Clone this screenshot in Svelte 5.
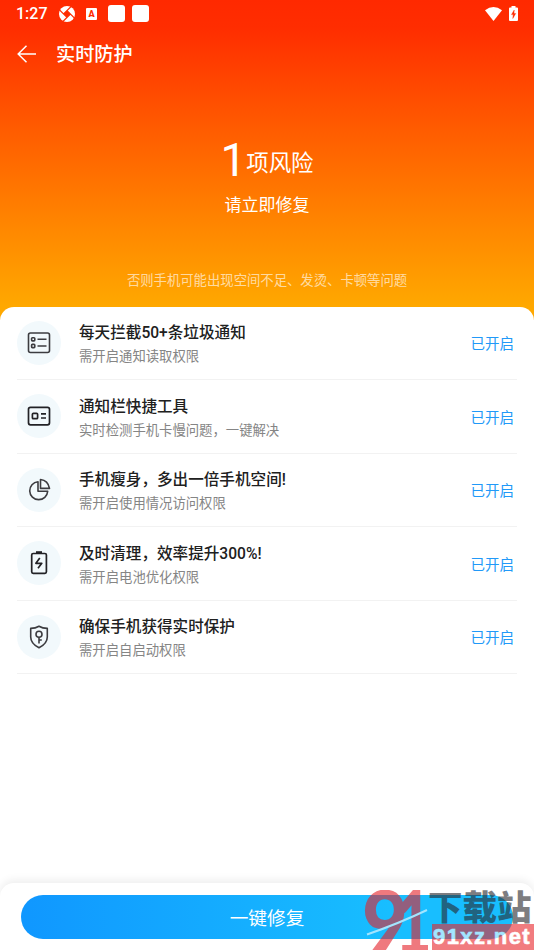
<script lang="ts">
  interface Item {
    icon: "list" | "tools" | "pie" | "battery" | "shield";
    title: string;
    desc: string;
  }

  const items: Item[] = [
    { icon: "list", title: "每天拦截50+条垃圾通知", desc: "需开启通知读取权限" },
    { icon: "tools", title: "通知栏快捷工具", desc: "实时检测手机卡慢问题，一键解决" },
    { icon: "pie", title: "手机瘦身，多出一倍手机空间!", desc: "需开启使用情况访问权限" },
    { icon: "battery", title: "及时清理，效率提升300%!", desc: "需开启电池优化权限" },
    { icon: "shield", title: "确保手机获得实时保护", desc: "需开启自启动权限" },
  ];
</script>

<div class="screen">
  <header class="hero">
    <div class="status-bar">
      <span class="time">1:27</span>
      <svg class="swirl" viewBox="0 0 16 16">
        <circle cx="8" cy="8" r="8" fill="#fff" />
        <path d="M8 4.600 11.400 8 8 11.400 4.600 8Z" fill="#ff2c00" />
        <path d="M4.600 8 12.300.3M8 4.600 15.700 12.300M11.400 8 3.700 15.700M8 11.400.3 3.700" stroke="#ff2c00" stroke-width="1.2" />
      </svg>
      <span class="badge-a">A</span>
      <i class="block"></i>
      <i class="block second"></i>
      <svg class="wifi" viewBox="0 0 17 14"><path d="M0 3.2Q8.5-3.2 17 3.2L8.5 14Z" fill="#fff" /></svg>
      <svg class="charge" viewBox="0 0 9 15">
        <path d="M2.5 0h4v1.5H8q1 0 1 1V14q0 1-1 1H1q-1 0-1-1V2.500q0-1 1-1h1.500Z" fill="#fff" />
        <path d="M5.200 4 2.500 8.600h1.700L3.800 12.500 6.700 7.500H5Z" fill="#ff2c00" stroke="#ff2c00" stroke-width=".4" />
      </svg>
    </div>

    <nav>
      <svg class="back" viewBox="0 0 20 20"><path d="M19 10H1.500M9.500 1.700 1.200 10 9.500 18.300" /></svg>
      <h1>实时防护</h1>
    </nav>

    <div class="risk"><b>1</b><span>项风险</span></div>
    <p class="advice">请立即修复</p>
    <p class="hint">否则手机可能出现空间不足、发烫、卡顿等问题</p>
  </header>

  <main>
    {#each items as item}
      <section class="row">
        <div class="icon">
          <svg viewBox="0 0 24 24" class={item.icon}>
            {#if item.icon === "list"}
              <rect x="1.500" y="2" width="21" height="19.500" rx="2" />
              <rect x="4.600" y="6.700" width="3.200" height="3.200" rx=".8" />
              <rect x="4.600" y="13.400" width="3.200" height="3.200" rx=".8" />
              <path d="M10.500 8.300h9M10.500 15h9" />
            {:else if item.icon === "tools"}
              <rect x="1.500" y="3.300" width="21" height="17.500" rx="2" />
              <rect x="5.400" y="9.300" width="5.200" height="5.400" rx="1" />
              <path d="M14 9.800h5M14 14h5" />
            {:else if item.icon === "pie"}
              <path d="M11 3.700A9 9 0 1 0 20.700 13.300H11Z" />
              <path d="M13.500 1.500Q21 2.300 22.500 10.400H13.500Z" />
            {:else if item.icon === "battery"}
              <rect x="4.700" y="2.500" width="14.700" height="19.800" rx="1.500" />
              <path d="M9 1.300h6" stroke-width="2.200" />
              <path d="m12.800 7-3.900 5.300h5.900L11 17.200" />
            {:else}
              <path d="M12 1.200Q15.500 3.300 20.300 3.400V12c0 5-3.300 8.200-8.300 10.800-5-2.600-8.300-5.800-8.300-10.800V3.400Q8.500 3.300 12 1.200Z" />
              <circle cx="12" cy="9.300" r="3" />
              <path d="M12 12.300V18.500M12 15h2.800" />
            {/if}
          </svg>
        </div>
        <div class="text">
          <h2>{item.title}</h2>
          <p>{item.desc}</p>
        </div>
        <span class="state">已开启</span>
      </section>
    {/each}
  </main>

  <footer>
    <button type="button">一键修复</button>
  </footer>

  <div class="watermark">
    <svg class="mark" viewBox="0 0 64 60">
      <text x="-2" y="64" textLength="46" lengthAdjust="spacingAndGlyphs">9</text>
      <text x="31" y="64" textLength="37" lengthAdjust="spacingAndGlyphs">1</text>
      <path d="M3 44.500Q36 33 63 20" />
    </svg>
    <div class="wm-text">
      <span class="wm-name">下载站</span>
      <span class="wm-url">91xz.net</span>
    </div>
  </div>
</div>

<style>
  :global(body) { margin: 0; background: #fff; }
  .screen {
    position: relative; display: flex; flex-direction: column; width: 534px; height: 950px;
    overflow: hidden; background: #fff; color: #202020;
    font-family: Roboto, "Noto Sans CJK SC", sans-serif;
  }
  h1, h2, p { margin: 0; }
  .hero {
    height: 320px; flex: none; color: #fff; text-align: center;
    background: linear-gradient(#ff2900 0, #ff2d00 28px, #ff5c00 130px, #ff8600 225px, #ffa800 306px);
  }

  .status-bar { display: flex; align-items: center; height: 27px; padding: 0 16px 0 16px; }
  .time { width: 43px; text-align: left; font-size: 16px; font-weight: 500; }
  .swirl { width: 16px; height: 16px; }
  .badge-a {
    width: 11px; height: 12px; margin-left: 11px; border-radius: 1px; background: #fff;
    color: #ff2c00; font-size: 9px; line-height: 12px; font-weight: 900;
  }
  .block { width: 17px; height: 17px; margin-left: 11px; border-radius: 3px; background: #fff; }
  .block.second { margin-left: 7px; }
  .wifi { width: 17px; height: 14px; margin-left: auto; }
  .charge { width: 9px; height: 15px; margin-left: 7px; }

  nav { display: flex; align-items: center; height: 53px; padding-left: 17px; gap: 19px; }
  .back { width: 20px; height: 20px; fill: none; stroke: #fff; stroke-width: 1.5; }
  h1 { padding-top: 2px; font-size: 19.2px; line-height: 28px; font-weight: 500; }

  .risk { display: flex; align-items: center; justify-content: center; height: 54px; margin-top: 53px; line-height: 54px; }
  .risk b { font-size: 46px; font-weight: 400; }
  .risk span { padding-top: 6px; font-size: 22.4px; }
  .advice { margin-top: 6px; font-size: 17px; line-height: 24px; }
  .hint { margin-top: 54px; font-size: 13.35px; line-height: 20px; color: rgba(255, 255, 255, .65); }

  main { position: relative; flex: 1; margin-top: -13.5px; border-radius: 14px 14px 0 0; background: #fff; }
  .row {
    display: flex; align-items: center; height: 73.5px; margin: 0 17px; padding-right: 3px;
    box-sizing: border-box; border-bottom: 1px solid #f2f2f2;
  }
  .icon {
    display: flex; align-items: center; justify-content: center;
    width: 44px; height: 44px; border-radius: 50%; background: #f2f9fc;
  }
  .icon svg { width: 24px; height: 24px; fill: none; stroke: #3c3c40; stroke-width: 1.6; stroke-linejoin: round; }
  .icon .tools, .icon .battery { stroke: #222226; stroke-width: 1.7; }
  .text { flex: 1; margin-left: 18px; padding-top: 5px; }
  h2 { font-size: 15.6px; line-height: 24px; font-weight: 500; white-space: nowrap; }
  .text p { font-size: 13.35px; line-height: 24px; color: #858585; }
  .state { font-size: 14.5px; color: #2199f8; }

  footer {
    position: relative; height: 67px; flex: none; padding: 11.5px 21px 0; box-sizing: border-box;
    border-radius: 14px 14px 0 0; background: #fff; box-shadow: 0 -3px 9px rgba(0, 0, 0, .07);
  }
  button {
    display: block; width: 100%; height: 44px; padding: 0; border: 0; border-radius: 22px;
    background: linear-gradient(90deg, #1097ff, #18beff 75%); color: #fff;
    font-family: inherit; font-size: 18.7px;
  }

  .watermark { position: absolute; right: 0; bottom: 0; display: flex; width: 170px; height: 60px; opacity: .6; }
  .mark { width: 64px; height: 60px; flex: none; }
  .mark text { fill: #e62129; font-family: Lato, sans-serif; font-size: 88px; font-weight: 900; }
  .mark path { fill: none; stroke: #fff; stroke-width: 2; }
  .wm-text { display: flex; flex-direction: column; flex: 1; }
  .wm-name {
    height: 34px; color: #28282c; font-family: "Noto Sans CJK SC", sans-serif;
    font-size: 34.5px; line-height: 31px; font-weight: 900; white-space: nowrap;
  }
  .wm-url {
    height: 26px; margin-left: 4px; padding-left: 1px; background: #e9262b; color: #fff;
    font-family: "Liberation Sans", sans-serif; font-size: 22px; line-height: 26px; font-weight: 700;
    letter-spacing: 1.4px; -webkit-text-stroke: .6px #fff; white-space: nowrap;
  }
</style>
